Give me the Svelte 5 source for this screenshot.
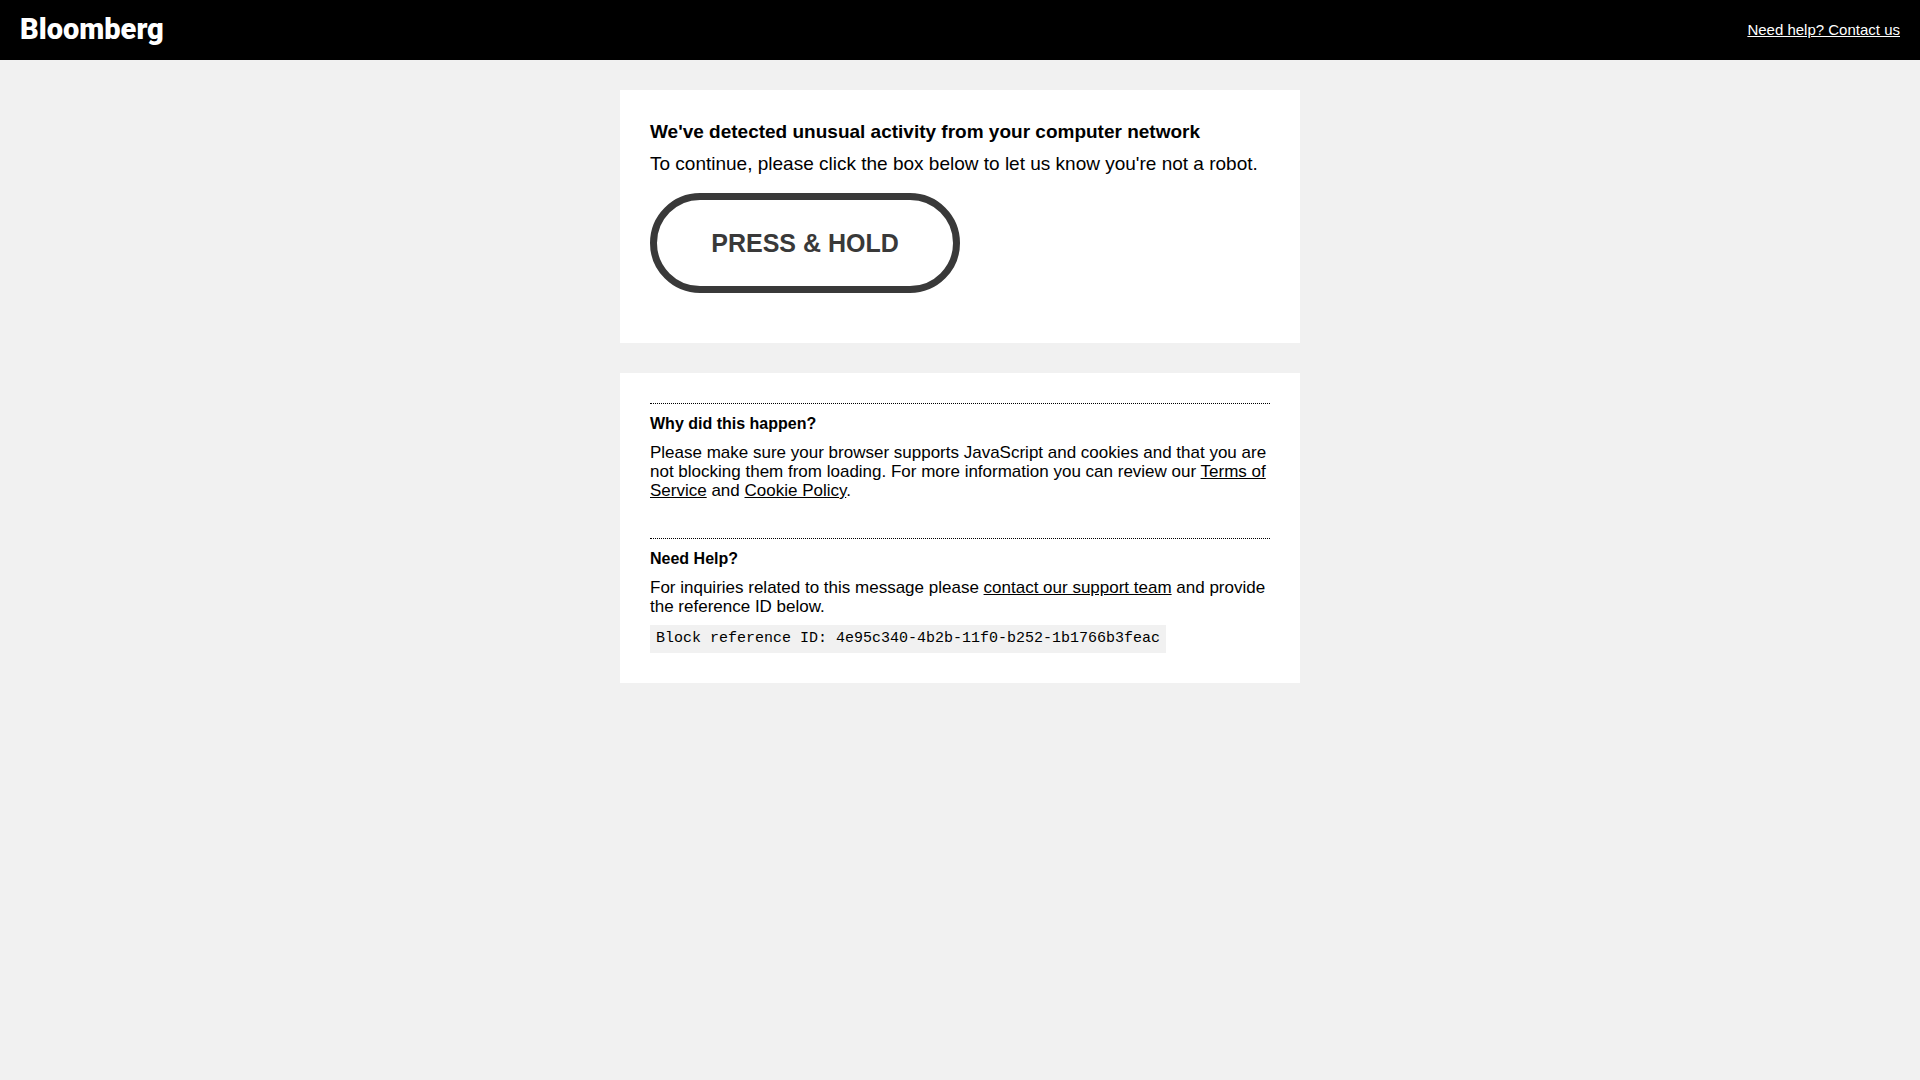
<script>
  const referenceId = '4e95c340-4b2b-11f0-b252-1b1766b3feac';
</script>

<header class="topbar">
  <a class="brand" href="/">Bloomberg</a>
  <a class="contact" href="/feedback">Need help? Contact us</a>
</header>

<main class="content">
  <section class="card challenge">
    <h1>We've detected unusual activity from your computer network</h1>
    <p class="lead">To continue, please click the box below to let us know you're not a robot.</p>
    <button class="hold" type="button">PRESS &amp; HOLD</button>
  </section>

  <section class="card">
    <article class="info">
      <h2>Why did this happen?</h2>
      <p>
        Please make sure your browser supports JavaScript and cookies and that you are not
        blocking them from loading. For more information you can review our
        <a href="/tos">Terms of Service</a> and <a href="/cookies">Cookie Policy</a>.
      </p>
    </article>
    <article class="info">
      <h2>Need Help?</h2>
      <p>
        For inquiries related to this message please
        <a href="/feedback">contact our support team</a> and provide the reference ID below.
      </p>
      <p class="reference">Block reference ID: {referenceId}</p>
    </article>
  </section>
</main>

<style>
  :global(body) {
    margin: 0;
    background: #f1f1f1;
    color: #000;
    font-family: 'Liberation Sans', Arial, sans-serif;
    font-size: 17px;
    line-height: 19px;
  }

  .topbar {
    display: flex;
    align-items: center;
    justify-content: space-between;
    box-sizing: border-box;
    min-height: 60px;
    padding: 0 20px 2px;
    background: #000;
  }

  .topbar a {
    color: #fff;
  }

  .brand {
    font-family: Roboto, 'Liberation Sans', sans-serif;
    font-size: 29px;
    font-weight: 900;
    line-height: 30px;
    text-decoration: none;
  }

  .contact {
    font-size: 15px;
  }

  .content {
    display: flex;
    flex-direction: column;
    gap: 30px;
    box-sizing: border-box;
    max-width: 680px;
    margin: 0 auto;
    padding: 30px 0;
  }

  .card {
    padding: 30px;
    background: #fff;
  }

  .challenge {
    padding-bottom: 50px;
  }

  h1,
  h2,
  p {
    margin: 0;
  }

  h1 {
    font-size: 19px;
    line-height: 24px;
  }

  .lead {
    margin-top: 8px;
    font-size: 19px;
    line-height: 24px;
  }

  .hold {
    display: block;
    box-sizing: border-box;
    min-width: 310px;
    height: 100px;
    margin-top: 17px;
    border: 7px solid #393939;
    border-radius: 50px;
    background: #fff;
    color: #393939;
    font-family: inherit;
    font-size: 25px;
    font-weight: 700;
  }

  .info {
    padding-top: 10px;
    border-top: 1px dotted #000;
  }

  .info + .info {
    margin-top: 38px;
  }

  h2 {
    margin-bottom: 10px;
    font-size: 16px;
    line-height: 19px;
  }

  a {
    color: #000;
  }

  .reference {
    width: fit-content;
    margin-top: 9px;
    padding: 4px 6px;
    background: #f1f1f1;
    font-family: 'Liberation Mono', monospace;
    font-size: 15px;
    line-height: 20px;
  }
</style>
